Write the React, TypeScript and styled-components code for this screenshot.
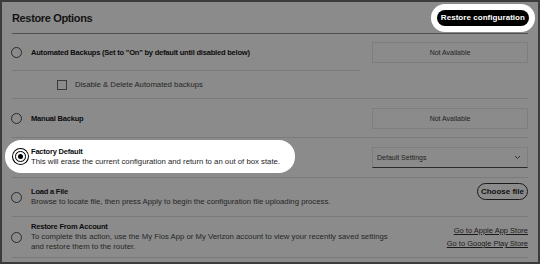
import styled, { createGlobalStyle } from 'styled-components';

const Global = createGlobalStyle`
    body {
        margin: 0;
        font-family: "Liberation Sans", Arial, sans-serif;
    }
`;

const Frame = styled.div`
    width: 540px;
    height: 264px;
    box-sizing: border-box;
    border: 2px solid #3c3c3c;
    background: #8b8b8b;
    padding: 0 10px;
    color: #141414;
    overflow: hidden;
`;

const Header = styled.div`
    height: 31px;
    display: flex;
    align-items: center;
    justify-content: space-between;
    border-bottom: 1px solid #505050;
`;

const Title = styled.h1`
    margin: 0;
    font-size: 11px;
    font-weight: 700;
    letter-spacing: -0.35px;
`;

const Halo = styled.div`
    background: #fff;
    border-radius: 14px;
    padding: 6px 6px;
    margin-right: -7px;
    display: flex;
`;

const DarkButton = styled.button`
    background: #000;
    color: #fff;
    border: none;
    border-radius: 9px;
    height: 16px;
    padding: 0 4px;
    font-family: inherit;
    font-size: 8px;
    font-weight: 700;
    letter-spacing: 0.05px;
`;

type RowProps = {
    readonly height: number
    readonly short?: boolean
}
const Row = styled.div<RowProps>`
    height: ${({ height }) => height}px;
    display: flex;
    align-items: center;
    position: relative;
    border-bottom: ${({ short }) => short ? 'none' : '1px solid #7a7a7a'};
`;

const ShortLine = styled.div`
    position: absolute;
    left: 0;
    bottom: 0;
    width: 348px;
    border-bottom: 1px solid #7a7a7a;
`;

type SpotProps = {
    readonly lit?: boolean
}
const Left = styled.div<SpotProps>`
    flex: 1;
    min-width: 0;
    display: flex;
    align-items: center;
    gap: 9px;
    ${({ lit }) => lit && `
        flex: none;
        align-self: flex-start;
        gap: 5px;
        background: #fff;
        border-radius: 16px;
        margin: 2px 0 0 -7px;
        padding: 0 15px 0 8px;
        height: 33px;
    `}
`;

type RadioProps = {
    readonly checked?: boolean
}
const Radio = styled.span<RadioProps>`
    flex: none;
    width: 11px;
    height: 11px;
    border-radius: 50%;
    border: 1px solid #2a2a2a;
    box-sizing: border-box;
    margin-left: -1px;
    position: relative;
    ${({ checked }) => checked && `
        border: 1px solid #000;
        box-shadow: 0 0 0 2px #fff, 0 0 0 3px #000;
        margin-left: 2px;
        &::after {
            content: '';
            position: absolute;
            left: 2px;
            top: 2px;
            width: 5px;
            height: 5px;
            border-radius: 50%;
            background: #000;
        }
    `}
`;

const Texts = styled.div`
    display: flex;
    flex-direction: column;
    gap: 1px;
`;

const Label = styled.div`
    font-size: 7.5px;
    font-weight: 700;
    letter-spacing: -0.2px;
    color: #0c0c0c;
    white-space: nowrap;
`;

const Desc = styled.div`
    font-size: 7.75px;
    line-height: 10px;
    color: #262626;
    white-space: nowrap;
`;

type RightProps = {
    readonly top?: boolean
}
const Right = styled.div<RightProps>`
    width: 156px;
    flex: none;
    display: flex;
    flex-direction: column;
    align-items: flex-end;
    gap: 4px;
    align-self: ${({ top }) => top ? 'flex-start' : 'auto'};
    margin-top: ${({ top }) => top ? '5px' : '0'};
`;

const StaticBox = styled.div`
    width: 156px;
    height: 21px;
    box-sizing: border-box;
    border: 1px solid #7e7e7e;
    display: flex;
    align-items: center;
    justify-content: center;
    font-size: 7px;
    color: #222;
`;

const Select = styled.div`
    width: 156px;
    height: 21px;
    box-sizing: border-box;
    border: 1px solid #7e7e7e;
    border-bottom: 1px solid #2a2a2a;
    display: flex;
    align-items: center;
    justify-content: space-between;
    padding: 0 6px 0 4px;
    font-size: 7px;
    color: #222;
`;

const Check = styled.span`
    width: 10px;
    height: 10px;
    box-sizing: border-box;
    border: 1px solid #3a3a3a;
    margin-left: 45px;
    margin-right: 8px;
`;

const OutlineButton = styled.button`
    height: 17px;
    padding: 0 3px;
    border: 1.5px solid #1a1a1a;
    border-radius: 9px;
    background: transparent;
    font-family: inherit;
    font-size: 8px;
    font-weight: 700;
    color: #111;
`;

const Link = styled.a`
    font-size: 7.5px;
    color: #1a1a1a;
    text-decoration: underline;
`;

const Spacer = styled.div`
    flex: 1;
`;

export default function App() {
    return (
        <>
            <Global />
            <Frame>
                <Header>
                    <Title>Restore Options</Title>
                    <Halo>
                        <DarkButton>Restore configuration</DarkButton>
                    </Halo>
                </Header>
                <Row height={37} short>
                    <Left>
                        <Radio />
                        <Label>Automated Backups (Set to "On" by default until disabled below)</Label>
                    </Left>
                    <Right>
                        <StaticBox>Not Available</StaticBox>
                    </Right>
                    <ShortLine />
                </Row>
                <Row height={27}>
                    <Check />
                    <Desc>Disable &amp; Delete Automated backups</Desc>
                </Row>
                <Row height={38}>
                    <Left>
                        <Radio />
                        <Label>Manual Backup</Label>
                    </Left>
                    <Right>
                        <StaticBox>Not Available</StaticBox>
                    </Right>
                </Row>
                <Row height={39}>
                    <Left lit>
                        <Radio checked />
                        <Texts>
                            <Label>Factory Default</Label>
                            <Desc>This will erase the current configuration and return to an out of box state.</Desc>
                        </Texts>
                    </Left>
                    <Spacer />
                    <Right>
                        <Select>
                            Default Settings
                            <svg width="7" height="5" viewBox="0 0 7 5">
                                <path d="M1 1l2.5 2.5L6 1" fill="none" stroke="#333" strokeWidth="1" />
                            </svg>
                        </Select>
                    </Right>
                </Row>
                <Row height={38}>
                    <Left>
                        <Radio />
                        <Texts>
                            <Label>Load a File</Label>
                            <Desc>Browse to locate file, then press Apply to begin the configuration file uploading process.</Desc>
                        </Texts>
                    </Left>
                    <Right top>
                        <OutlineButton>Choose file</OutlineButton>
                    </Right>
                </Row>
                <Row height={40}>
                    <Left>
                        <Radio />
                        <Texts>
                            <Label>Restore From Account</Label>
                            <Desc>
                                To complete this action, use the My Fios App or My Verizon account to view your recently saved settings<br />
                                and restore them to the router.
                            </Desc>
                        </Texts>
                    </Left>
                    <Right>
                        <Link>Go to Apple App Store</Link>
                        <Link>Go to Google Play Store</Link>
                    </Right>
                </Row>
            </Frame>
        </>
    );
}
